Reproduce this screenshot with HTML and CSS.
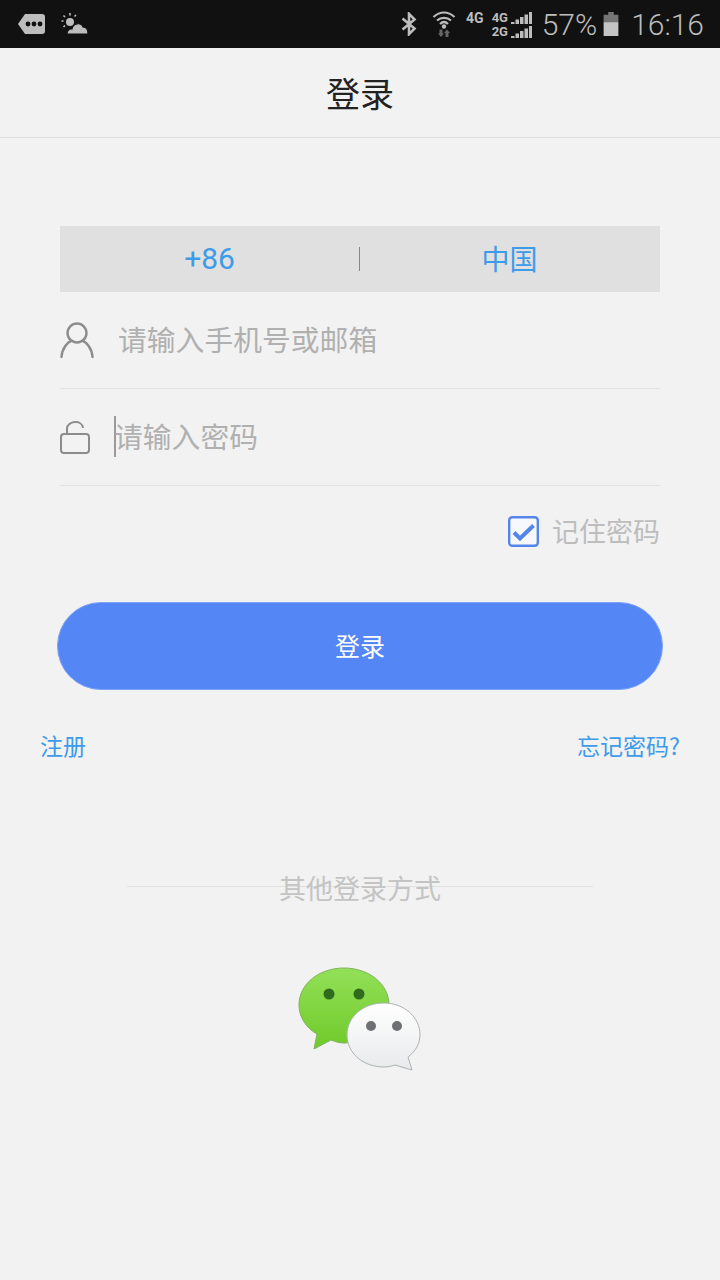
FILE: index.html
```html
<!DOCTYPE html>
<html lang="zh-CN">
<head>
<meta charset="UTF-8">
<meta name="viewport" content="width=device-width, initial-scale=1.0">
<title>登录</title>
<link rel="stylesheet" href="styles.css">
</head>
<body>
<div class="status-bar">
    <div class="status-left">
        <svg class="icon-msg" width="28" height="22" viewBox="0 0 28 22">
            <path d="M7 1H24a3 3 0 0 1 3 3V18a3 3 0 0 1-3 3H7L0 11Z" fill="#bdbdbd"/>
            <circle cx="10" cy="11" r="2.400" fill="#111"/>
            <circle cx="16" cy="11" r="2.400" fill="#111"/>
            <circle cx="22" cy="11" r="2.400" fill="#111"/>
        </svg>
        <svg class="icon-weather" width="28" height="22" viewBox="0 0 28 22">
            <circle cx="9" cy="9" r="4" fill="#bdbdbd"/>
            <path d="M9 0V2.500M0.500 8H2.500M2.500 2.500L4 4M15 2L13.500 3.500M2.500 14L4 12.500" stroke="#bdbdbd" stroke-width="1.600"/>
            <path d="M6 21C6 17 9 15.500 11 16C12 10 20 9 22 14C25 14 27 17 27 21Z" fill="#bdbdbd" stroke="#111" stroke-width="1.200"/>
        </svg>
    </div>
    <div class="status-right">
        <svg class="icon-bt" width="18" height="24" viewBox="0 0 18 26">
            <path d="M2 7L15 18L9 24V2L15 8L2 19" fill="none" stroke="#bdbdbd" stroke-width="2.800"/>
        </svg>
        <svg class="icon-wifi" width="24" height="26" viewBox="0 0 24 26">
            <path d="M1.500 6C8 0 16 0 22.500 6M5 9.500C9 6 15 6 19 9.500M8 13C10.500 10.500 13.500 10.500 16 13" fill="none" stroke="#bdbdbd" stroke-width="2.200"/>
            <circle cx="12" cy="15.500" r="2.200" fill="#bdbdbd"/>
            <path d="M7.500 18.500H10.500V22.500H12L9 26L6 22.500H7.500ZM13.500 26H16.500V22H18L15 18.500L12 22H13.500Z" fill="#666"/>
        </svg>
        <span class="net-label">4G</span>
        <div class="net-dual">
            <div class="net-line">
                <span class="net-small">4G</span>
                <svg width="21" height="12" viewBox="0 0 21 12"><path d="M0 12V10H3.500V12ZM4.500 12V7.500H8V12ZM9 12V5H12.500V12ZM13.500 12V2.500H17V12ZM18 12V0H21V12Z" fill="#bdbdbd"/></svg>
            </div>
            <div class="net-line">
                <span class="net-small">2G</span>
                <svg width="21" height="12" viewBox="0 0 21 12"><path d="M0 12V10H3.500V12ZM4.500 12V7.500H8V12ZM9 12V5H12.500V12ZM13.500 12V2.500H17V12ZM18 12V0H21V12Z" fill="#bdbdbd"/></svg>
            </div>
        </div>
        <span class="battery-text">57%</span>
        <svg class="icon-battery" width="16" height="24" viewBox="0 0 16 26">
            <path d="M5 0H11V3H16V11H0V3H5Z" fill="#757575"/>
            <rect x="0" y="11" width="16" height="15" fill="#c4c4c4"/>
        </svg>
        <span class="clock">16:16</span>
    </div>
</div>

<div class="title-bar">登录</div>

<div class="login-form">
    <div class="country-bar">
        <div class="country-cell country-code">+86</div>
        <div class="country-sep"></div>
        <div class="country-cell country-name">中国</div>
    </div>

    <div class="input-row phone-row">
        <svg class="icon-user" width="34" height="38" viewBox="0 0 34 38">
            <circle cx="17" cy="12" r="9.500" fill="none" stroke="#8c8c8c" stroke-width="2.400"/>
            <path d="M1.500 36C2 27 8 21 11 20M32.500 36C32 27 26 21 23 20" fill="none" stroke="#8c8c8c" stroke-width="2.400" stroke-linecap="round"/>
        </svg>
        <span class="placeholder">请输入手机号或邮箱</span>
    </div>

    <div class="input-row password-row">
        <svg class="icon-lock" width="30" height="36" viewBox="0 0 30 36">
            <rect x="1" y="15" width="28" height="19" rx="3" fill="none" stroke="#8c8c8c" stroke-width="2"/>
            <path d="M7 15V9.500C7 2 22 0 23 9" fill="none" stroke="#8c8c8c" stroke-width="2"/>
        </svg>
        <span class="caret"></span>
        <span class="placeholder">请输入密码</span>
    </div>

    <div class="remember-row">
        <svg class="icon-check" width="31" height="31" viewBox="0 0 31 31">
            <rect x="1.200" y="1.200" width="28.600" height="28.600" rx="3" fill="#f6f8fc" stroke="#5585e8" stroke-width="2.400"/>
            <path d="M6 16.500L12 22.500L25.500 9.500" fill="none" stroke="#5585e8" stroke-width="4"/>
        </svg>
        <span class="remember-text">记住密码</span>
    </div>
</div>

<div class="login-btn">登录</div>

<div class="links-row">
    <span class="link">注册</span>
    <span class="link">忘记密码?</span>
</div>

<div class="other-login">
    <span class="other-text">其他登录方式</span>
</div>

<div class="wechat">
    <svg width="124" height="104" viewBox="0 0 124 104">
        <defs>
            <linearGradient id="greenFill" x1="0" y1="0" x2="0" y2="1">
                <stop offset="0" stop-color="#93e058"/>
                <stop offset="1" stop-color="#6fca2a"/>
            </linearGradient>
            <linearGradient id="whiteFill" x1="0" y1="0" x2="0" y2="1">
                <stop offset="0" stop-color="#ffffff"/>
                <stop offset="1" stop-color="#e8eaeb"/>
            </linearGradient>
        </defs>
        <path d="M46 1C21 1 1 17 1 38C1 50 8 61 19 67L16 82L33 73C38 75 42 76 46 76C71 76 91 59 91 38C91 17 71 1 46 1Z" fill="url(#greenFill)" stroke="#7fb45c" stroke-width="1"/>
        <circle cx="31" cy="27" r="5.500" fill="#2f6b1d"/>
        <circle cx="61" cy="27" r="5.500" fill="#2f6b1d"/>
        <path d="M86 36C65 36 49 50 49 68C49 86 65 100 86 100C90 100 94 99 97 98L114 103L110 90C118 84 122 76 122 68C122 50 106 36 86 36Z" fill="url(#whiteFill)" stroke="#aeb2b2" stroke-width="1"/>
        <circle cx="73" cy="59" r="5" fill="#6e7072"/>
        <circle cx="99" cy="59" r="5" fill="#6e7072"/>
    </svg>
</div>
</body>
</html>
```

FILE: styles.css
```css
* {
    box-sizing: border-box;
}

body {
    margin: 0;
    padding: 0;
    width: 720px;
    height: 1280px;
    overflow: hidden;
    background-color: #f2f2f2;
    font-family: "Noto Sans CJK SC", "Liberation Sans", sans-serif;
}

.status-bar {
    height: 48px;
    background-color: #111;
    display: flex;
    justify-content: space-between;
    align-items: center;
    padding: 0 16px 0 18px;
    color: #bdbdbd;
}

.status-left {
    display: flex;
    align-items: center;
    gap: 15px;
}

.status-right {
    display: flex;
    align-items: center;
}

.icon-bt {
    margin-right: 14px;
}

.icon-wifi {
    margin-right: 10px;
}

.net-label {
    font-family: Roboto, sans-serif;
    font-weight: 700;
    font-size: 14px;
    margin-right: 8px;
    position: relative;
    top: -6px;
}

.net-dual {
    margin-right: 10px;
}

.net-line {
    display: flex;
    align-items: flex-end;
    height: 14px;
}

.net-small {
    font-family: Roboto, sans-serif;
    font-weight: 700;
    font-size: 13px;
    line-height: 13px;
    width: 19px;
}

.battery-text,
.clock {
    font-family: Roboto, sans-serif;
    font-size: 30px;
    font-weight: 300;
}

.icon-battery {
    margin: 0 12px 0 6px;
}

.title-bar {
    height: 90px;
    border-bottom: 1px solid #dedede;
    display: flex;
    align-items: center;
    justify-content: center;
    font-size: 34px;
    color: #222;
}

.login-form {
    margin: 88px 60px 0;
}

.country-bar {
    height: 66px;
    background-color: #e0e0e0;
    display: flex;
    align-items: center;
    color: #3d9be9;
    font-size: 28px;
    line-height: 60px;
}

.country-cell {
    text-align: center;
}

.country-code {
    width: 299px;
    font-family: Roboto, sans-serif;
    font-size: 30px;
}

.country-name {
    width: 300px;
    padding: 0 1px 2px 0;
}

.country-sep {
    width: 1px;
    height: 24px;
    background-color: #3d9be9;
}

.input-row {
    display: flex;
    align-items: center;
    border-bottom: 1px solid #e2e2e2;
}

.phone-row {
    height: 97px;
    gap: 24px;
}

.password-row {
    height: 97px;
}

.placeholder {
    font-size: 28.800px;
    line-height: 36px;
    color: #b0b0b0;
    margin-bottom: 2px;
}

.icon-lock {
    margin-right: 24px;
}

.caret {
    width: 2px;
    height: 41px;
    background-color: #9a9a9a;
    margin: 0 -2px 2px 0;
}

.remember-row {
    height: 94px;
    display: flex;
    align-items: center;
    justify-content: flex-end;
    gap: 13px;
}

.remember-text {
    font-size: 27px;
    line-height: 36px;
    color: #bdbdbd;
    margin-bottom: 4px;
}

.icon-check {
    margin-bottom: 4px;
}

.login-btn {
    width: 606px;
    height: 88px;
    margin: 22px auto 0;
    border: 1px solid #7ea3f7;
    border-radius: 44px;
    background-color: #5586f6;
    color: #fff;
    font-size: 25px;
    line-height: 36px;
    padding-bottom: 2px;
    display: flex;
    align-items: center;
    justify-content: center;
}

.links-row {
    display: flex;
    justify-content: space-between;
    padding: 0 40px;
    margin-top: 37px;
}

.link {
    font-size: 23px;
    line-height: 36px;
    color: #3d9be9;
}

.other-login {
    width: 466px;
    margin: 105px auto 0;
    height: 40px;
    display: flex;
    justify-content: center;
    background: linear-gradient(#e0e0e0, #e0e0e0) no-repeat 0 18px / 100% 1px;
    line-height: 40px;
}

.other-text {
    font-size: 27px;
    color: #c4c4c4;
}

.wechat {
    margin-top: 59px;
    display: flex;
    justify-content: center;
}
```
